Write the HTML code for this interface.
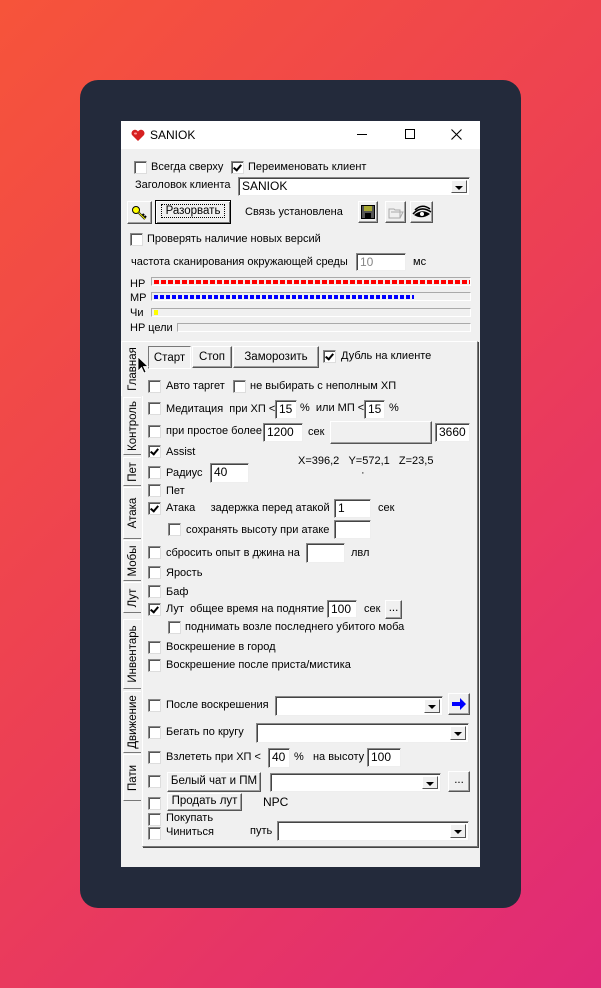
<!DOCTYPE html>
<html><head><meta charset="utf-8"><style>
*{margin:0;padding:0;box-sizing:border-box}
body{width:601px;height:988px;overflow:hidden;background:linear-gradient(135deg,#f6543a 0%,#ec3f55 50%,#e02a78 100%);font-family:"Liberation Sans",sans-serif;font-size:11px;color:#000;position:relative}
.card{position:absolute;left:80px;top:80px;width:441px;height:828px;background:#232a3b;border-radius:18px}
.win{position:absolute;left:121px;top:121px;width:359px;height:746px;background:#f0f0f0}
.tb{position:absolute;left:121px;top:121px;width:359px;height:28px;background:#fff}
.a{position:absolute;white-space:nowrap;line-height:13px}
.cb{position:absolute;width:13px;height:13px;background:#fff;border:1px solid #888;border-right-color:#ddd;border-bottom-color:#ddd;box-shadow:inset 1px 1px 0 #555}
.cb.k::after{content:"";position:absolute;left:3px;top:1px;width:3px;height:6px;border:solid #000;border-width:0 2px 2px 0;transform:rotate(40deg)}
.in{position:absolute;background:#fff;border:1px solid #888;border-right-color:#eee;border-bottom-color:#eee;box-shadow:inset 1px 1px 0 #444;padding:1px 3px;line-height:14px;font-size:12px}
.bt{position:absolute;background:#f0f0f0;border:1px solid #fff;border-right-color:#555;border-bottom-color:#555;box-shadow:inset -1px -1px 0 #a0a0a0;text-align:center;line-height:16px;font-size:11.5px}
.dd{position:absolute;right:2px;top:2px;bottom:2px;width:16px;background:#f0f0f0;border:1px solid #fff;border-right-color:#555;border-bottom-color:#555}
.dd::after{content:"";position:absolute;left:3px;top:5px;border:4px solid transparent;border-top:4px solid #000;border-bottom:0}
.bar{position:absolute;height:9px;border:1px solid #aaa;border-right-color:#fff;border-bottom-color:#fff;background:#f0f0f0}
.tab{position:absolute;left:123px;width:18px;background:#f0f0f0;border:1px solid #fff;border-right:none;border-bottom-color:#777}
.tab span{position:absolute;left:50%;top:50%;transform:translate(-50%,-50%) rotate(-90deg);white-space:nowrap;font-size:11.5px}
</style></head><body>
<div class="card"></div>
<div class="win"></div>
<div class="tb"></div>
<svg class="a" style="left:131px;top:129px" width="14" height="13" viewBox="0 0 14 13"><path d="M7 12 L1 6 A3.2 3.2 0 0 1 7 2.5 A3.2 3.2 0 0 1 13 6 Z" fill="#d62020"/><ellipse cx="4.5" cy="4.5" rx="1.5" ry="1" fill="#f99"/></svg>
<div class="a" style="left:150px;top:129px;font-size:12px">SANIOK</div>
<div class="a" style="left:357px;top:134px;width:10px;height:1px;background:#000"></div>
<div class="a" style="left:405px;top:129px;width:10px;height:10px;border:1px solid #000"></div>
<svg class="a" style="left:451px;top:129px" width="11" height="11"><path d="M0.5 0.5 L10.5 10.5 M10.5 0.5 L0.5 10.5" stroke="#000" stroke-width="1.1"/></svg>

<div class="cb" style="left:134px;top:161px"></div><div class="a" style="left:151px;top:161px">Всегда сверху</div>
<div class="cb k" style="left:231px;top:161px"></div><div class="a" style="left:248px;top:161px">Переименовать клиент</div>
<div class="a" style="left:135px;top:179px">Заголовок клиента</div>
<div class="in" style="left:238px;top:177px;width:232px;height:19px;font-size:12px">SANIOK<div class="dd"></div></div>
<div class="bt" style="left:127px;top:201px;width:25px;height:23px"><svg style="position:absolute;left:3px;top:3px" width="18" height="16"><circle cx="5" cy="5" r="3.5" fill="#ff0" stroke="#000"/><path d="M7.5 7.5 L14 14 M11 11 L13 9 M13 13 L15 11" stroke="#000" stroke-width="2.2"/><path d="M7.5 7.5 L14 14" stroke="#ee0" stroke-width="1"/></svg></div>
<div class="bt" style="left:155px;top:200px;width:76px;height:24px;line-height:21px;border-color:#000;box-shadow:inset 1px 1px 0 #fff,inset -1px -1px 0 #777"><span style="outline:1px dotted #000;padding:0 4px">Разорвать</span></div>
<div class="a" style="left:245px;top:206px">Связь установлена</div>
<div class="bt" style="left:358px;top:201px;width:20px;height:22px"><div style="position:absolute;left:2px;top:3px;width:14px;height:14px;background:#555;border:1px solid #000"><div style="position:absolute;left:2px;top:0;width:8px;height:5px;background:#aa3"></div><div style="position:absolute;left:3px;top:7px;width:6px;height:6px;background:#000"></div></div></div>
<div class="bt" style="left:385px;top:201px;width:21px;height:22px"><svg style="position:absolute;left:2px;top:4px" width="16" height="13"><path d="M1 3 H6 L7 4 H12 V12 H1 Z M3 6 H15 L12 12" fill="none" stroke="#aaa"/></svg></div>
<div class="bt" style="left:410px;top:201px;width:23px;height:22px"><svg style="position:absolute;left:1px;top:2px" width="20" height="17"><path d="M1 10 Q9 1 19 8 M3 6 Q10 -1 18 5" stroke="#000" stroke-width="1.5" fill="none"/><path d="M2 11 Q10 4 18 10 Q10 16 2 11 Z" fill="#000"/><circle cx="10" cy="10" r="2" fill="#fff"/></svg></div>

<div class="cb" style="left:130px;top:233px"></div><div class="a" style="left:147px;top:233px">Проверять наличие новых версий</div>
<div class="a" style="left:131px;top:256px">частота сканирования окружающей среды</div>
<div class="in" style="left:356px;top:253px;width:50px;height:18px;color:#888">10</div>
<div class="a" style="left:413px;top:256px">мс</div>

<div class="a" style="left:130px;top:278px">HP</div>
<div class="bar" style="left:151px;top:277px;width:320px;background:repeating-linear-gradient(90deg,#f00 0 5px,transparent 5px 7px) 2px 2px/316px 4px no-repeat,#f0f0f0"></div>
<div class="a" style="left:130px;top:292px">MP</div>
<div class="bar" style="left:151px;top:292px;width:320px;background:repeating-linear-gradient(90deg,#00f 0 4px,transparent 4px 6px) 2px 2px/260px 4px no-repeat,#f0f0f0"></div>
<div class="a" style="left:130px;top:307px">Чи</div>
<div class="bar" style="left:151px;top:308px;width:320px;background:linear-gradient(#ff0,#ff0) 2px 1px/4px 5px no-repeat,#f0f0f0"></div>
<div class="a" style="left:130px;top:322px">HP цели</div>
<div class="bar" style="left:177px;top:323px;width:294px"></div>

<div class="a" style="left:142px;top:341px;width:336px;height:506px;border:1px solid #fff;border-right-color:#777;border-bottom-color:#777;box-shadow:1px 1px 0 #444"></div>
<div class="tab" style="left:121px;top:341px;width:22px;height:55px;border-bottom:none;z-index:2"><span>Главная</span></div>
<div class="tab" style="top:397px;height:58px"><span>Контроль</span></div>
<div class="tab" style="top:457px;height:29px"><span>Пет</span></div>
<div class="tab" style="top:487px;height:52px"><span>Атака</span></div>
<div class="tab" style="top:540px;height:41px"><span>Мобы</span></div>
<div class="tab" style="top:582px;height:31px"><span>Лут</span></div>
<div class="tab" style="top:619px;height:70px"><span>Инвентарь</span></div>
<div class="tab" style="top:691px;height:62px"><span>Движение</span></div>
<div class="tab" style="top:754px;height:47px"><span>Пати</span></div>
<svg class="a" style="left:137px;top:356px;z-index:3" width="14" height="20"><path d="M1 1 L1 15 L4.5 11.5 L7 17 L9 16 L6.5 10.5 L11 10.5 Z" fill="#000" stroke="#fff" stroke-width="0.8"/></svg>

<div class="bt" style="left:148px;top:346px;width:43px;height:23px;line-height:22px;border-color:#777 #fff #fff #777;box-shadow:none">Старт</div>
<div class="bt" style="left:192px;top:346px;width:40px;height:22px;line-height:20px">Стоп</div>
<div class="bt" style="left:233px;top:346px;width:86px;height:22px;line-height:20px">Заморозить</div>
<div class="cb k" style="left:323px;top:350px"></div><div class="a" style="left:341px;top:350px">Дубль на клиенте</div>

<div class="cb" style="left:148px;top:380px"></div><div class="a" style="left:166px;top:380px">Авто таргет</div>
<div class="cb" style="left:233px;top:380px"></div><div class="a" style="left:250px;top:380px">не выбирать с неполным ХП</div>
<div class="cb" style="left:148px;top:402px"></div><div class="a" style="left:166px;top:403px">Медитация &nbsp;при ХП &lt;</div>
<div class="in" style="left:275px;top:400px;width:22px;height:19px">15</div>
<div class="a" style="left:300px;top:402px">% &nbsp;или МП &lt;</div>
<div class="in" style="left:364px;top:400px;width:21px;height:19px">15</div>
<div class="a" style="left:389px;top:402px">%</div>
<div class="cb" style="left:148px;top:425px"></div><div class="a" style="left:166px;top:425px">при простое более</div>
<div class="in" style="left:263px;top:423px;width:40px;height:19px">1200</div>
<div class="a" style="left:308px;top:426px">сек</div>
<div class="bt" style="left:330px;top:421px;width:102px;height:23px"></div>
<div class="in" style="left:435px;top:423px;width:35px;height:19px">3660</div>
<div class="cb k" style="left:148px;top:445px"></div><div class="a" style="left:166px;top:446px">Assist</div>
<div class="a" style="left:298px;top:455px">X=396,2 &nbsp;&nbsp;Y=572,1 &nbsp;&nbsp;Z=23,5</div>
<div class="a" style="left:361px;top:467px">·</div>
<div class="cb" style="left:148px;top:466px"></div><div class="a" style="left:166px;top:467px">Радиус</div>
<div class="in" style="left:210px;top:463px;width:39px;height:20px">40</div>
<div class="cb" style="left:148px;top:484px"></div><div class="a" style="left:166px;top:485px">Пет</div>
<div class="cb k" style="left:148px;top:502px"></div><div class="a" style="left:166px;top:502px">Атака &nbsp;&nbsp;&nbsp;&nbsp;задержка перед атакой</div>
<div class="in" style="left:334px;top:499px;width:37px;height:19px">1</div>
<div class="a" style="left:378px;top:502px">сек</div>
<div class="cb" style="left:168px;top:523px"></div><div class="a" style="left:186px;top:524px">сохранять высоту при атаке</div>
<div class="in" style="left:334px;top:520px;width:37px;height:19px"></div>
<div class="cb" style="left:148px;top:546px"></div><div class="a" style="left:166px;top:547px">сбросить опыт в джина на</div>
<div class="in" style="left:306px;top:543px;width:39px;height:20px"></div>
<div class="a" style="left:351px;top:547px">лвл</div>
<div class="cb" style="left:148px;top:566px"></div><div class="a" style="left:166px;top:567px">Ярость</div>
<div class="cb" style="left:148px;top:585px"></div><div class="a" style="left:166px;top:586px">Баф</div>
<div class="cb k" style="left:148px;top:603px"></div><div class="a" style="left:166px;top:603px">Лут &nbsp;общее время на поднятие</div>
<div class="in" style="left:327px;top:600px;width:30px;height:18px">100</div>
<div class="a" style="left:364px;top:603px">сек</div>
<div class="bt" style="left:385px;top:600px;width:17px;height:19px;line-height:14px">...</div>
<div class="cb" style="left:168px;top:621px"></div><div class="a" style="left:185px;top:621px">поднимать возле последнего убитого моба</div>
<div class="cb" style="left:148px;top:641px"></div><div class="a" style="left:166px;top:641px">Воскрешение в город</div>
<div class="cb" style="left:148px;top:659px"></div><div class="a" style="left:166px;top:659px">Воскрешение после приста/мистика</div>
<div class="cb" style="left:148px;top:699px"></div><div class="a" style="left:166px;top:699px">После воскрешения</div>
<div class="in" style="left:275px;top:696px;width:168px;height:20px"><div class="dd"></div></div>
<div class="bt" style="left:448px;top:693px;width:22px;height:22px"><svg style="position:absolute;left:3px;top:4px" width="15" height="12"><path d="M0 4 H8 V0 L14 6 L8 12 V8 H0 Z" fill="#00f"/></svg></div>
<div class="cb" style="left:148px;top:726px"></div><div class="a" style="left:166px;top:726px">Бегать по кругу</div>
<div class="in" style="left:256px;top:723px;width:213px;height:20px"><div class="dd"></div></div>
<div class="cb" style="left:148px;top:751px"></div><div class="a" style="left:166px;top:751px">Взлететь при ХП &lt;</div>
<div class="in" style="left:268px;top:748px;width:22px;height:20px">40</div>
<div class="a" style="left:294px;top:751px">% &nbsp;&nbsp;на высоту</div>
<div class="in" style="left:367px;top:748px;width:34px;height:19px">100</div>
<div class="cb" style="left:148px;top:775px"></div>
<div class="bt" style="left:167px;top:772px;width:94px;height:20px;line-height:17px">Белый чат и ПМ</div>
<div class="in" style="left:270px;top:773px;width:171px;height:19px"><div class="dd"></div></div>
<div class="bt" style="left:448px;top:771px;width:22px;height:21px;line-height:16px">...</div>
<div class="cb" style="left:148px;top:797px"></div>
<div class="bt" style="left:167px;top:793px;width:75px;height:18px;line-height:15px">Продать лут</div>
<div class="a" style="left:263px;top:796px;font-size:12px">NPC</div>
<div class="cb" style="left:148px;top:813px"></div><div class="a" style="left:166px;top:812px">Покупать</div>
<div class="cb" style="left:148px;top:827px"></div><div class="a" style="left:166px;top:826px">Чиниться</div>
<div class="a" style="left:250px;top:825px">путь</div>
<div class="in" style="left:277px;top:821px;width:192px;height:20px"><div class="dd"></div></div>
</body></html>
